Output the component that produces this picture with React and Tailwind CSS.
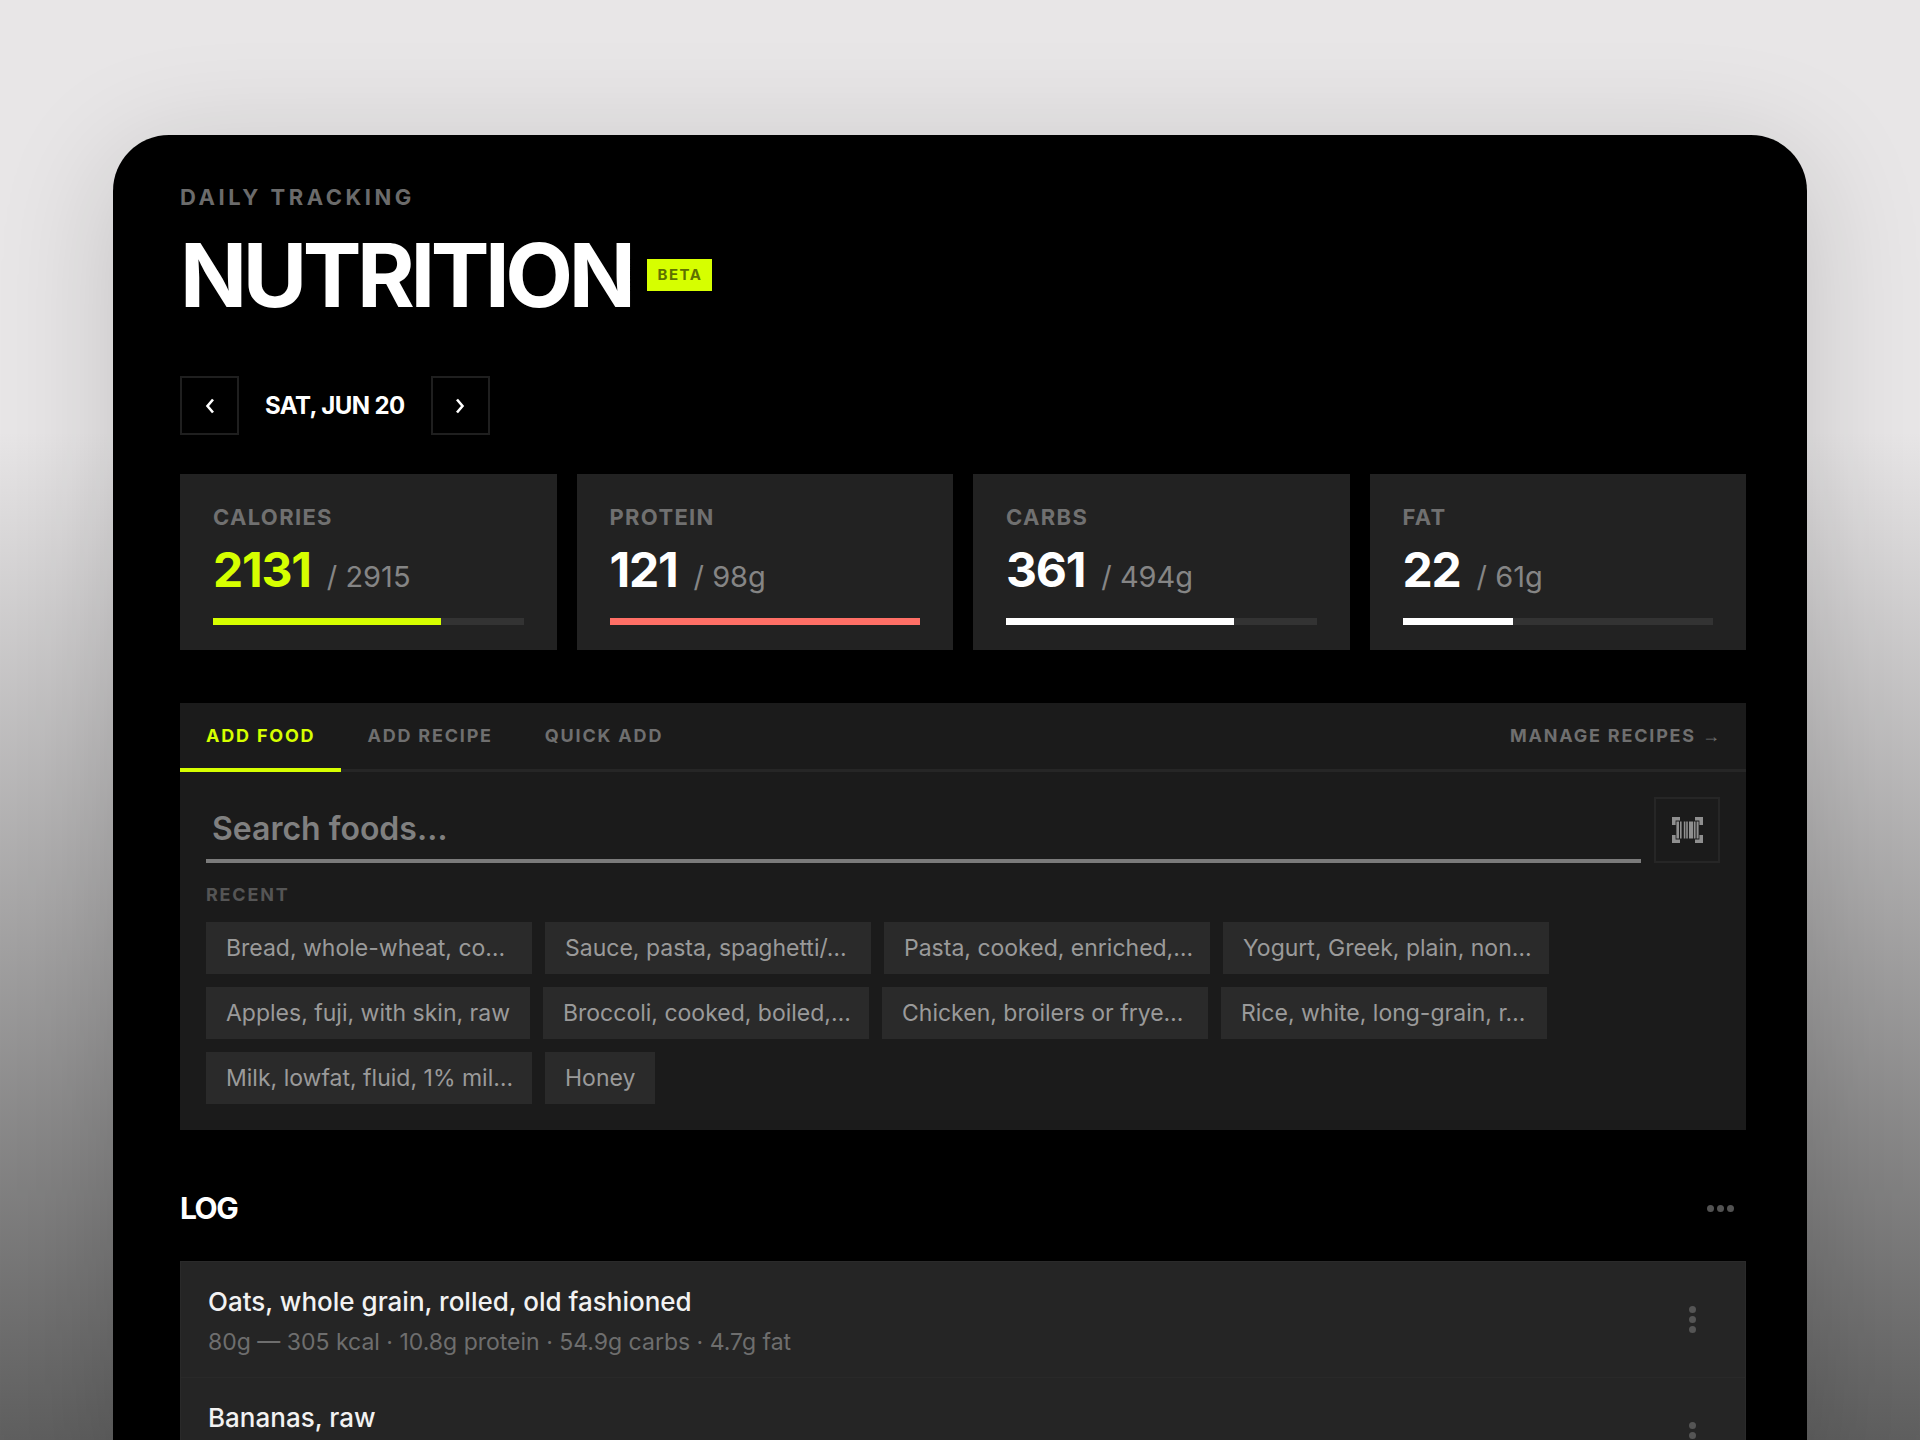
const macros = [
  { label: "CALORIES", value: "2131", goal: "2915", percent: 73.3, text: "text-[#d6ff00]", bar: "bg-[#d6ff00]" },
  { label: "PROTEIN", value: "121", goal: "98g", percent: 100, text: "text-white", bar: "bg-[#ff6f66]" },
  { label: "CARBS", value: "361", goal: "494g", percent: 73.3, text: "text-white", bar: "bg-white" },
  { label: "FAT", value: "22", goal: "61g", percent: 35.7, text: "text-white", bar: "bg-white" },
];

const recent = [
  "Bread, whole-wheat, co…",
  "Sauce, pasta, spaghetti/…",
  "Pasta, cooked, enriched,…",
  "Yogurt, Greek, plain, non…",
  "Apples, fuji, with skin, raw",
  "Broccoli, cooked, boiled,…",
  "Chicken, broilers or frye…",
  "Rice, white, long-grain, r…",
  "Milk, lowfat, fluid, 1% mil…",
  "Honey",
];

const log = [
  { name: "Oats, whole grain, rolled, old fashioned", detail: "80g — 305 kcal · 10.8g protein · 54.9g carbs · 4.7g fat" },
  { name: "Bananas, raw", detail: "118g — 105 kcal · 1.3g protein · 27g carbs · 0.4g fat" },
];

function Chevron({ d }) {
  return (
    <svg width="12" height="18" viewBox="0 0 12 18" fill="none" stroke="currentColor" strokeWidth="2.6" aria-hidden="true">
      <path d={d} />
    </svg>
  );
}

function BarcodeIcon() {
  return (
    <svg width="31" height="26" viewBox="0 0 31 26" fill="#8f8f8f" aria-hidden="true">
      <path d="M0 0h8v3.4H3.6V8H0zM23 0h8v8h-3.6V3.4H23zM0 18h3.6v4.6H8V26H0zM27.4 18H31v8h-8v-3.4h4.4z" />
      <path d="M4.4 4.4h2.6v17.2H4.4zM8 4.4h1.6v17.2H8zM11.8 4.4h1.6v17.2h-1.6zM14.2 4.4h1.6v17.2h-1.6zM17 4.4h4.2v17.2H17zM22 4.4h1.6v17.2H22zM24.6 4.4h2v17.2h-2z" />
    </svg>
  );
}

function MacroCard({ macro }) {
  return (
    <div className="bg-[#222222] px-[33px] pt-[29px] pb-[25px]">
      <div className="text-[22px] leading-7 font-bold tracking-[0.06em] text-[#707070]">{macro.label}</div>
      <div className="mt-[15px] flex items-baseline gap-4 leading-[48px]">
        <span className={`text-[48px] leading-[48px] font-bold tracking-tight ${macro.text}`}>{macro.value}</span>
        <span className="text-[29px] leading-[32px] text-[#858585]">/ {macro.goal}</span>
      </div>
      <div className="mt-6 h-[7px] bg-[#333333]">
        <div className={`h-full ${macro.bar}`} style={{ width: `${macro.percent}%` }} />
      </div>
    </div>
  );
}

export default function App() {
  return (
    <div className="h-screen overflow-hidden bg-[linear-gradient(to_bottom,#e8e6e7_0%,#e8e6e7_30%,#5f5f5f_100%)] px-[113px] pt-[135px] font-['Inter',sans-serif]">
      <main className="min-h-full rounded-t-[56px] bg-black pt-12 pr-[61px] pl-[67px] shadow-[0_20px_120px_rgba(0,0,0,0.16)]">
        <header>
          <p className="text-[22px] leading-7 font-bold tracking-[0.16em] text-[#6b6b6b]">DAILY TRACKING</p>
          <div className="mt-4 flex items-center gap-4">
            <h1 className="text-[88px] leading-[96px] font-bold tracking-tighter text-white">NUTRITION</h1>
            <span className="bg-[#d6ff00] px-[10px] text-[15px] leading-8 font-bold tracking-widest text-[#5e7000]">BETA</span>
          </div>
        </header>

        <div className="mt-[53px] flex items-center gap-[26px]">
          <button type="button" aria-label="Previous day" className="flex size-[59px] items-center justify-center border-2 border-[#1f1f1f] text-white">
            <Chevron d="M9 2.5 3.5 9 9 15.5" />
          </button>
          <span className="text-[24px] leading-8 font-bold tracking-tight text-white">SAT, JUN 20</span>
          <button type="button" aria-label="Next day" className="flex size-[59px] items-center justify-center border-2 border-[#1f1f1f] text-white">
            <Chevron d="M3 2.5 8.5 9 3 15.5" />
          </button>
        </div>

        <section className="mt-[39px] grid grid-cols-4 gap-5">
          {macros.map((m) => (
            <MacroCard key={m.label} macro={m} />
          ))}
        </section>

        <section className="mt-[53px] bg-[#1b1b1b]">
          <div className="flex border-b-[3px] border-[#262626] text-[18px] font-bold tracking-widest text-[#6f6f6f]">
            <button type="button" className="-mb-[3px] h-[69px] border-b-4 border-[#d6ff00] px-[26px] tracking-widest text-[#d6ff00]">ADD FOOD</button>
            <button type="button" className="-mb-[3px] h-[69px] border-b-4 border-transparent px-[26px] tracking-widest">ADD RECIPE</button>
            <button type="button" className="-mb-[3px] h-[69px] border-b-4 border-transparent px-[26px] tracking-widest">QUICK ADD</button>
            <a href="#recipes" className="mr-[26px] ml-auto self-center">
              MANAGE RECIPES <span className="font-['Liberation_Sans',sans-serif] tracking-normal">→</span>
            </a>
          </div>
          <div className="px-[26px] pt-[25px] pb-[26px]">
            <div className="flex gap-[13px]">
              <input
                type="text"
                aria-label="Search foods"
                placeholder="Search foods…"
                className="h-[66px] min-w-0 flex-1 border-b-4 border-[#7b7b7b] bg-transparent pl-[6px] text-[32px] font-semibold text-white outline-none placeholder:text-[#808080]"
              />
              <button type="button" aria-label="Scan barcode" className="flex size-[66px] items-center justify-center border-2 border-[#262626]">
                <BarcodeIcon />
              </button>
            </div>
            <h2 className="mt-5 text-[18px] leading-6 font-bold tracking-widest text-[#555555]">RECENT</h2>
            <div className="mt-[15px] flex flex-wrap gap-[13px]">
              {recent.map((food) => (
                <button
                  key={food}
                  type="button"
                  className={`h-[52px] bg-[#2a2a2a] pl-5 text-left text-[23px] whitespace-nowrap text-[#9a9a9a] ${food.endsWith("…") ? "w-[326px]" : "pr-5"}`}
                >
                  {food}
                </button>
              ))}
            </div>
          </div>
        </section>

        <section className="mt-[58px]">
          <div className="flex items-center justify-between">
            <h2 className="text-[30px] leading-10 font-bold tracking-tighter text-white">LOG</h2>
            <button type="button" aria-label="Log options" className="px-3 py-2">
              <svg width="27" height="7" viewBox="0 0 27 7" fill="#525252" aria-hidden="true">
                <circle cx="3.5" cy="3.5" r="3.5" />
                <circle cx="13.5" cy="3.5" r="3.5" />
                <circle cx="23.5" cy="3.5" r="3.5" />
              </svg>
            </button>
          </div>
          <ul className="mt-[33px] border border-[#2a2a2a] bg-[#252525]">
            {log.map((item) => (
              <li key={item.name} className="flex items-center justify-between border-b border-[#292929] pt-[22px] pr-[49px] pb-[19px] pl-[27px]">
                <div>
                  <h3 className="text-[26px] leading-9 font-medium text-[#f2f2f2]">{item.name}</h3>
                  <p className="mt-[6px] text-[23px] leading-8 text-[#6e6e6e]">{item.detail}</p>
                </div>
                <button type="button" aria-label={`Options for ${item.name}`} className="pb-3 pt-2 pl-2">
                  <svg width="7" height="27" viewBox="0 0 7 27" fill="#555555" aria-hidden="true">
                    <circle cx="3.5" cy="3.5" r="3.5" />
                    <circle cx="3.5" cy="13.5" r="3.5" />
                    <circle cx="3.5" cy="23.5" r="3.5" />
                  </svg>
                </button>
              </li>
            ))}
          </ul>
        </section>
      </main>
    </div>
  );
}
